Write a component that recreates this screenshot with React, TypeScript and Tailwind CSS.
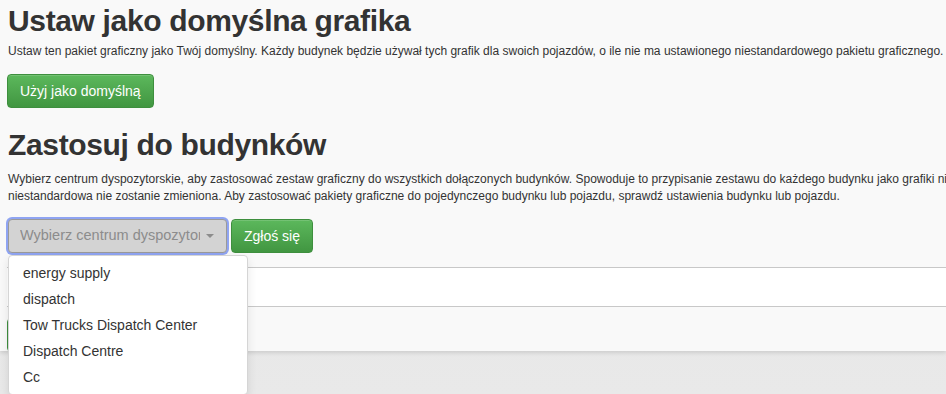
import React from "react";

const centres = ["energy supply", "dispatch", "Tow Trucks Dispatch Center", "Dispatch Centre", "Cc"];

function GreenButton({ children, className = "" }: { children: React.ReactNode; className?: string }) {
  return (
    <button
      className={
        "rounded-[4px] border border-[#3e8f3e] bg-gradient-to-b from-[#5cb85c] to-[#419641] px-3 text-[14px] leading-[20px] text-white shadow-[inset_0_1px_0_rgba(255,255,255,0.15)] " +
        className
      }
    >
      {children}
    </button>
  );
}

export default function App() {
  return (
    <div
      className="relative h-[394px] w-[946px] overflow-hidden bg-gradient-to-b from-[#e3e3e3] to-[#e9e9e9] text-[#333]"
      style={{ fontFamily: '"Liberation Sans", Arial, sans-serif' }}
    >
      <div className="h-[351px] bg-[#f9f9f9] pl-2 pt-[4px] shadow-[0_2px_4px_rgba(0,0,0,0.12)]">
        <h1 className="whitespace-nowrap text-[30px] leading-[33px] font-bold tracking-[-0.35px]">Ustaw jako domyślna grafika</h1>
        <p className="mt-[6px] whitespace-nowrap text-[12px] leading-[17px]">
          Ustaw ten pakiet graficzny jako Twój domyślny. Każdy budynek będzie używał tych grafik dla swoich pojazdów, o ile nie ma ustawionego niestandardowego pakietu graficznego.
        </p>
        <GreenButton className="mt-[14px] h-[34px] -ml-px">Użyj jako domyślną</GreenButton>

        <h1 className="mt-[20px] whitespace-nowrap text-[30px] leading-[33px] font-bold tracking-[-0.35px]">Zastosuj do budynków</h1>
        <p className="mt-[10px] text-[12px] leading-[17px]">
          <span className="block whitespace-nowrap">
            Wybierz centrum dyspozytorskie, aby zastosować zestaw graficzny do wszystkich dołączonych budynków. Spowoduje to przypisanie zestawu do każdego budynku jako grafiki niestandardowej. Istniejąca grafika
          </span>
          <span className="block whitespace-nowrap">
            niestandardowa nie zostanie zmieniona. Aby zastosować pakiety graficzne do pojedynczego budynku lub pojazdu, sprawdź ustawienia budynku lub pojazdu.
          </span>
        </p>

        <div className="mt-[14px] flex items-center gap-1">
          <div className="flex h-[34px] w-[219px] items-center rounded-[4px] border border-[#9a9a9a] bg-[#d3d3d3] pl-[11px] pr-[12px] shadow-[0_0_0_2px_#8fa4f2]">
            <span className="flex-1 overflow-hidden whitespace-nowrap text-[14.5px] text-[#8c8c8c]">Wybierz centrum dyspozytorskie</span>
            <span className="ml-[6px] h-0 w-0 border-x-[4px] border-t-[4px] border-x-transparent border-t-[#8c8c8c]" />
          </div>
          <GreenButton className="h-[34px]">Zgłoś się</GreenButton>
        </div>

        <div className="mt-[14px] -ml-px border-y border-[#c8c8c8] bg-white h-[40px]" />
        <GreenButton className="mt-[11px] -ml-px h-[34px] w-[120px] border-[#2f6f2f]">&nbsp;</GreenButton>
      </div>

      <ul className="absolute left-[8px] top-[255px] w-[240px] rounded-[4px] border border-[#d5d5d5] bg-white py-[4px] shadow-[0_4px_10px_rgba(0,0,0,0.1)]">
        {centres.map((c) => (
          <li key={c} className="h-[26px] pl-[14px] text-[14px] leading-[26px] text-[#333]">
            {c}
          </li>
        ))}
      </ul>
    </div>
  );
}
